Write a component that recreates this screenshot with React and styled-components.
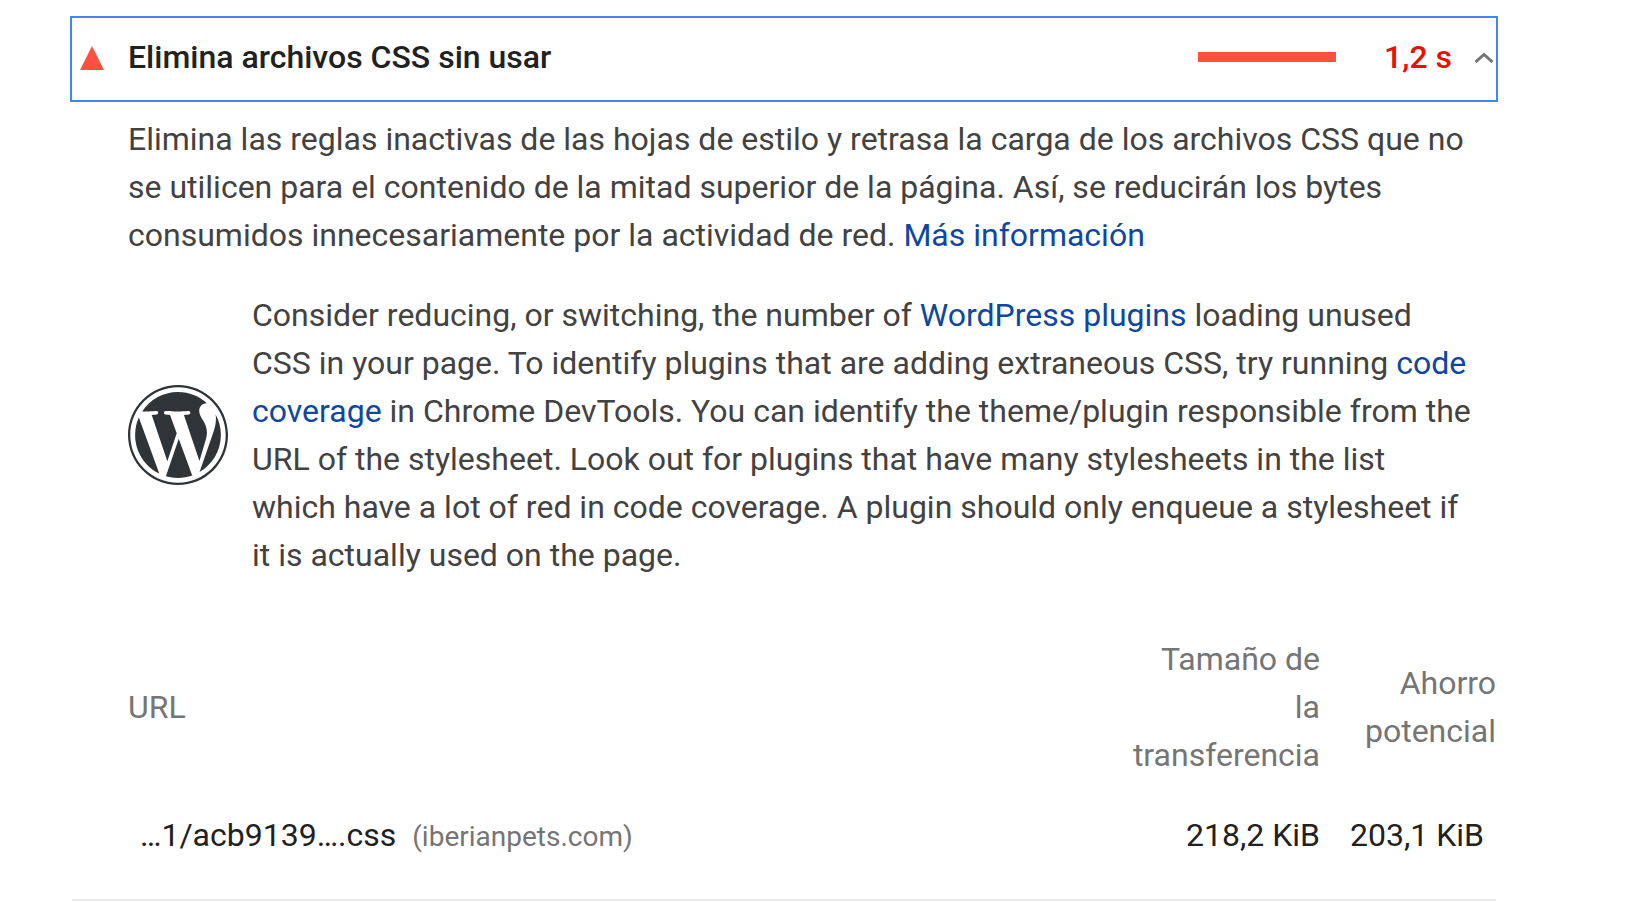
import React, { useState } from "react";
import styled, { createGlobalStyle } from "styled-components";

const GlobalStyle = createGlobalStyle`
  *, *::before, *::after { box-sizing: border-box; }
  body {
    margin: 0;
    background: #fff;
    color: #212121;
    font-family: Roboto, "Liberation Sans", sans-serif;
    font-size: 32px;
    line-height: 48px;
  }
`;

const Page = styled.main`
  padding: 16px 136px 0 70px;
`;

const Audit = styled.article`
  display: flex;
  flex-direction: column;
`;

const AuditHeader = styled.button`
  display: flex;
  align-items: center;
  width: 100%;
  padding: 15px 2px 19px 8px;
  border: 2px solid #4285f4;
  background: none;
  color: inherit;
  font: inherit;
  font-weight: 500;
  text-align: left;
  cursor: pointer;
`;

const FailIcon = styled.svg`
  flex: none;
  width: 24px;
  height: 26px;
  margin-right: 24px;
`;

const Title = styled.span`
  flex: 1;
`;

const Sparkline = styled.span`
  width: 138px;
  height: 10px;
  background: #ff4e42;
`;

const Savings = styled.span`
  width: 116px;
  color: #eb0f00;
  text-align: right;
`;

const Chevron = styled.svg`
  flex: none;
  width: 20px;
  height: 12px;
  margin-left: 22px;
  transform: ${({ $open }) => ($open ? "none" : "rotate(180deg)")};
`;

const AuditBody = styled.div`
  margin: 0 2px;
  padding: 13px 0 40px 56px;
  border-bottom: 2px solid #ebebeb;
`;

const Description = styled.p`
  margin: 0;
  padding-right: 24px;
  color: #424242;
`;

const StackPack = styled.section`
  display: flex;
  align-items: center;
  gap: 24px;
  margin: 32px 0 56px;
`;

const StackLogo = styled.svg`
  flex: none;
  width: 100px;
  height: 100px;
  fill: #2f3439;
`;

const Link = styled.a`
  color: #0d47a1;
  text-decoration: none;
`;

const Table = styled.table`
  width: 100%;
  border-collapse: collapse;
  table-layout: fixed;
`;

const Column = styled.col`
  width: ${({ $width }) => $width};
`;

const HeadCell = styled.th`
  padding: 0 0 0 ${({ $numeric }) => ($numeric ? "14px" : "0")};
  color: #757575;
  font-weight: 400;
  text-align: ${({ $numeric }) => ($numeric ? "right" : "left")};
`;

const Cell = styled.td`
  padding: 32px ${({ $last }) => ($last ? "12px" : "0")} 0 12px;
  text-align: ${({ $numeric }) => ($numeric ? "right" : "left")};
  vertical-align: top;
  white-space: nowrap;
`;

const Host = styled.span`
  margin-left: 16px;
  color: #757575;
  font-size: 28px;
  line-height: 1;
`;

function WordPressLogo() {
  return (
    <StackLogo viewBox="0 0 122.52 122.523" role="img" aria-label="WordPress">
      <path d="M8.708 61.26c0 20.802 12.089 38.779 29.619 47.298L13.258 39.872a52.354 52.354 0 0 0-4.55 21.388z" />
      <path d="M96.74 58.608c0-6.495-2.333-10.993-4.334-14.494-2.664-4.329-5.161-7.995-5.161-12.324 0-4.831 3.664-9.328 8.825-9.328.233 0 .454.029.681.042-9.35-8.566-21.807-13.796-35.489-13.796-18.36 0-34.513 9.42-43.91 23.688 1.233.037 2.395.063 3.382.063 5.497 0 14.006-.667 14.006-.667 2.833-.167 3.167 3.994.337 4.329 0 0-2.847.335-6.015.501L48.2 93.547l11.501-34.493-8.188-22.434c-2.83-.166-5.511-.501-5.511-.501-2.832-.166-2.5-4.496.332-4.329 0 0 8.679.667 13.843.667 5.496 0 14.006-.667 14.006-.667 2.835-.167 3.168 3.994.337 4.329 0 0-2.853.335-6.015.501l18.992 56.494 5.242-17.517c2.272-7.269 4.001-12.49 4.001-16.989z" />
      <path d="M62.184 65.857l-15.768 45.819a52.552 52.552 0 0 0 14.846 2.141c6.12 0 11.989-1.058 17.452-2.979a4.451 4.451 0 0 1-.374-.724z" />
      <path d="M107.376 36.046c.226 1.674.354 3.471.354 5.404 0 5.333-.996 11.328-3.996 18.824l-16.053 46.413c15.624-9.111 26.133-26.038 26.133-45.426.001-9.137-2.333-17.729-6.438-25.215z" />
      <path d="M61.262 0C27.483 0 0 27.481 0 61.26c0 33.783 27.483 61.263 61.262 61.263 33.778 0 61.265-27.48 61.265-61.263C122.526 27.481 95.04 0 61.262 0zm0 119.715c-32.23 0-58.453-26.223-58.453-58.455 0-32.23 26.222-58.451 58.453-58.451 32.229 0 58.45 26.221 58.45 58.451 0 32.232-26.221 58.455-58.45 58.455z" />
    </StackLogo>
  );
}

const resources = [
  { path: "…1/acb9139….css", host: "(iberianpets.com)", size: "218,2 KiB", saving: "203,1 KiB" },
];

export default function App() {
  const [open, setOpen] = useState(true);
  return (
    <Page>
      <GlobalStyle />
      <Audit>
        <AuditHeader type="button" aria-expanded={open} onClick={() => setOpen(!open)}>
          <FailIcon viewBox="0 0 24 26" aria-hidden="true">
            <path d="M12 2 24 26H0z" fill="#ff4e42" />
          </FailIcon>
          <Title>Elimina archivos CSS sin usar</Title>
          <Sparkline />
          <Savings>1,2 s</Savings>
          <Chevron $open={open} viewBox="0 0 20 12" aria-hidden="true">
            <path d="M1.500 11 10 3.500l8.500 7.500" fill="none" stroke="#757575" strokeWidth="3" />
          </Chevron>
        </AuditHeader>
        {open && (
          <AuditBody>
            <Description>
              Elimina las reglas inactivas de las hojas de estilo y retrasa la carga de los archivos
              CSS que no se utilicen para el contenido de la mitad superior de la página. Así, se
              reducirán los bytes consumidos innecesariamente por la actividad de red.{" "}
              <Link href="#info">Más información</Link>
            </Description>
            <StackPack>
              <WordPressLogo />
              <Description>
                Consider reducing, or switching, the number of{" "}
                <Link href="#plugins">WordPress plugins</Link> loading unused CSS in your page. To
                identify plugins that are adding extraneous CSS, try running{" "}
                <Link href="#coverage">code coverage</Link> in Chrome DevTools. You can identify the
                theme/plugin responsible from the URL of the stylesheet. Look out for plugins that
                have many stylesheets in the list which have a lot of red in code coverage. A plugin
                should only enqueue a stylesheet if it is actually used on the page.
              </Description>
            </StackPack>
            <Table>
              <colgroup>
                <Column $width="auto" />
                <Column $width="202px" />
                <Column $width="176px" />
              </colgroup>
              <thead>
                <tr>
                  <HeadCell scope="col">URL</HeadCell>
                  <HeadCell scope="col" $numeric>Tamaño de la transferencia</HeadCell>
                  <HeadCell scope="col" $numeric>Ahorro potencial</HeadCell>
                </tr>
              </thead>
              <tbody>
                {resources.map((r) => (
                  <tr key={r.path}>
                    <Cell>
                      {r.path}
                      <Host>{r.host}</Host>
                    </Cell>
                    <Cell $numeric>{r.size}</Cell>
                    <Cell $numeric $last>{r.saving}</Cell>
                  </tr>
                ))}
              </tbody>
            </Table>
          </AuditBody>
        )}
      </Audit>
    </Page>
  );
}
